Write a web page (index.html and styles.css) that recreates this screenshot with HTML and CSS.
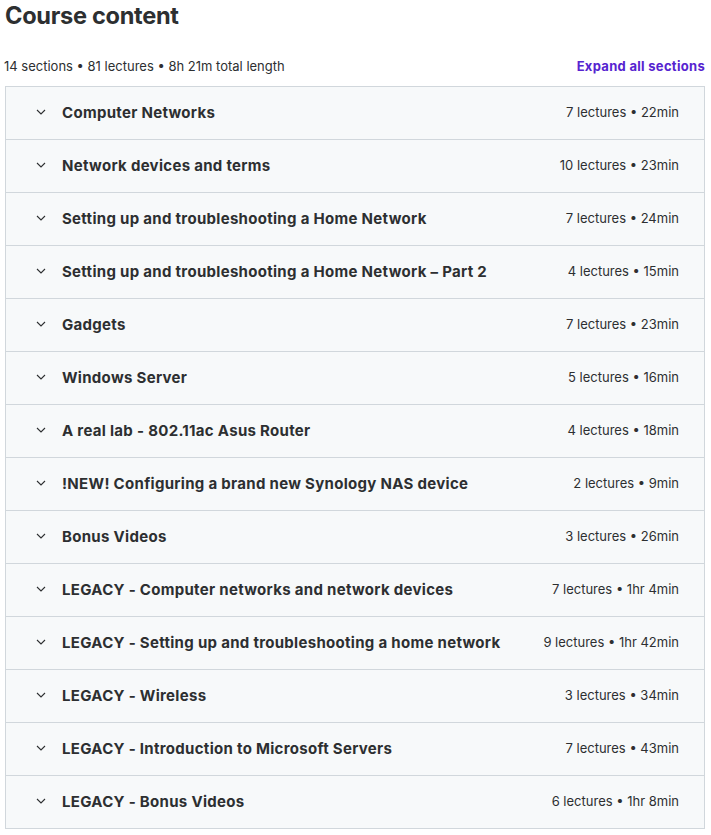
FILE: index.html
```html
<!DOCTYPE html>
<html lang="en">

<head>
    <meta charset="UTF-8">
    <meta name="viewport" content="width=device-width, initial-scale=1.0">
    <title>Course content</title>
    <link rel="stylesheet" href="styles.css">
</head>

<body>
    <div class="curriculum">
        <h2 class="title">Course content</h2>
        <div class="summary">
            <span>14 sections • 81 lectures • 8h 21m total length</span>
            <button class="expand">Expand all sections</button>
        </div>
        <div class="sections">
            <div class="section">
                <svg class="chev" viewBox="0 0 10 6"><path d="M1 1l4 4 4-4" /></svg>
                <span class="name">Computer Networks</span>
                <span class="meta">7 lectures • 22min</span>
            </div>
            <div class="section">
                <svg class="chev" viewBox="0 0 10 6"><path d="M1 1l4 4 4-4" /></svg>
                <span class="name">Network devices and terms</span>
                <span class="meta">10 lectures • 23min</span>
            </div>
            <div class="section">
                <svg class="chev" viewBox="0 0 10 6"><path d="M1 1l4 4 4-4" /></svg>
                <span class="name">Setting up and troubleshooting a Home Network</span>
                <span class="meta">7 lectures • 24min</span>
            </div>
            <div class="section">
                <svg class="chev" viewBox="0 0 10 6"><path d="M1 1l4 4 4-4" /></svg>
                <span class="name">Setting up and troubleshooting a Home Network – Part 2</span>
                <span class="meta">4 lectures • 15min</span>
            </div>
            <div class="section">
                <svg class="chev" viewBox="0 0 10 6"><path d="M1 1l4 4 4-4" /></svg>
                <span class="name">Gadgets</span>
                <span class="meta">7 lectures • 23min</span>
            </div>
            <div class="section">
                <svg class="chev" viewBox="0 0 10 6"><path d="M1 1l4 4 4-4" /></svg>
                <span class="name">Windows Server</span>
                <span class="meta">5 lectures • 16min</span>
            </div>
            <div class="section">
                <svg class="chev" viewBox="0 0 10 6"><path d="M1 1l4 4 4-4" /></svg>
                <span class="name">A real lab - 802.11ac Asus Router</span>
                <span class="meta">4 lectures • 18min</span>
            </div>
            <div class="section">
                <svg class="chev" viewBox="0 0 10 6"><path d="M1 1l4 4 4-4" /></svg>
                <span class="name">!NEW! Configuring a brand new Synology NAS device</span>
                <span class="meta">2 lectures • 9min</span>
            </div>
            <div class="section">
                <svg class="chev" viewBox="0 0 10 6"><path d="M1 1l4 4 4-4" /></svg>
                <span class="name">Bonus Videos</span>
                <span class="meta">3 lectures • 26min</span>
            </div>
            <div class="section">
                <svg class="chev" viewBox="0 0 10 6"><path d="M1 1l4 4 4-4" /></svg>
                <span class="name">LEGACY - Computer networks and network devices</span>
                <span class="meta">7 lectures • 1hr 4min</span>
            </div>
            <div class="section">
                <svg class="chev" viewBox="0 0 10 6"><path d="M1 1l4 4 4-4" /></svg>
                <span class="name">LEGACY - Setting up and troubleshooting a home network</span>
                <span class="meta">9 lectures • 1hr 42min</span>
            </div>
            <div class="section">
                <svg class="chev" viewBox="0 0 10 6"><path d="M1 1l4 4 4-4" /></svg>
                <span class="name">LEGACY - Wireless</span>
                <span class="meta">3 lectures • 34min</span>
            </div>
            <div class="section">
                <svg class="chev" viewBox="0 0 10 6"><path d="M1 1l4 4 4-4" /></svg>
                <span class="name">LEGACY - Introduction to Microsoft Servers</span>
                <span class="meta">7 lectures • 43min</span>
            </div>
            <div class="section">
                <svg class="chev" viewBox="0 0 10 6"><path d="M1 1l4 4 4-4" /></svg>
                <span class="name">LEGACY - Bonus Videos</span>
                <span class="meta">6 lectures • 1hr 8min</span>
            </div>
        </div>
    </div>
</body>

</html>
```

FILE: styles.css
```css
* {
    margin: 0;
    padding: 0;
    box-sizing: border-box;
}

body {
    background: #fff;
    color: #2d2f31;
    font-family: Inter, "Noto Sans", sans-serif;
}

.curriculum {
    padding: 0 6px 0 5px;
}

.title {
    font-size: 23.6px;
    font-weight: 700;
    line-height: 32px;
    letter-spacing: -0.3px;
}

.summary {
    display: flex;
    justify-content: space-between;
    align-items: center;
    height: 54px;
    padding-top: 14px;
    font-size: 13px;
    margin-left: -1px;
}

/* 展开全部按钮 */
.expand {
    border: none;
    background: none;
    color: #5624d0;
    font-family: inherit;
    font-size: 13px;
    font-weight: 700;
    letter-spacing: 0.3px;
}

.sections {
    border: 1px solid #d1d7dc;
}

.section {
    display: flex;
    align-items: center;
    height: 53px;
    padding: 0 25px 2px 30px;
    background: #f7f9fa;
    border-top: 1px solid #d1d7dc;
}

.section:first-child {
    border-top: none;
    height: 52px;
}

.chev {
    width: 10px;
    height: 6px;
    fill: none;
    stroke: #2d2f31;
    stroke-width: 1.1;
    margin-right: 16px;
}

.name {
    flex: 1;
    font-size: 15px;
    font-weight: 700;
    letter-spacing: 0.3px;
}

.meta {
    font-size: 13px;
}
```
